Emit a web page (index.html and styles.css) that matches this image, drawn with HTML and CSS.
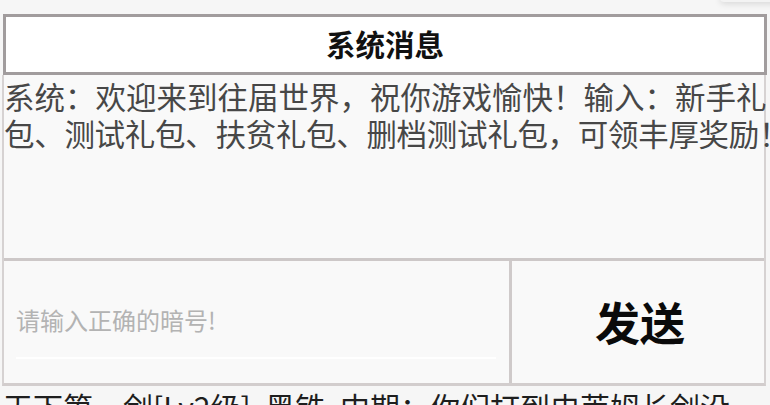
FILE: index.html
```html
<!DOCTYPE html>
<html lang="zh-CN">
<head>
<meta charset="utf-8">
<link rel="stylesheet" href="styles.css">
</head>
<body>
<div class="shadow"></div>
<div class="spacer"></div>
<div class="header">系统消息</div>
<div class="panel">
  <div class="msg">系统：欢迎来到往届世界，祝你游戏愉快！输入：新手礼<br><span class="tight">包、测试礼包、扶贫礼包、删档测试礼包，可领丰厚奖励！</span></div>
  <div class="input-row">
    <div class="field">
      <div class="placeholder">请输入正确的暗号!</div>
      <div class="underline"></div>
    </div>
    <div class="send">发送</div>
  </div>
</div>
<div class="chat">天下第一剑[Lv2级] 黑铁 中期：你们打到史莱姆长剑没</div>
</body>
</html>
```

FILE: styles.css
```css
html, body {
  margin: 0;
  padding: 0;
  overflow: hidden;
}
body {
  width: 770px;
  height: 405px;
  background: #f6f6f6;
  font-family: "Noto Sans CJK SC", "Noto Sans", sans-serif;
  position: relative;
}
.shadow {
  position: absolute;
  top: -6px;
  right: -10px;
  width: 60px;
  height: 8px;
  border-radius: 4px;
  box-shadow: 0 2px 6px rgba(0, 0, 0, 0.12);
  background: #f3f3f3;
}
.spacer {
  height: 14px;
}
.header {
  margin: 0 3px;
  height: 55px;
  border: 3px solid #a19c9d;
  background: #ffffff;
  color: #111;
  font-weight: bold;
  font-size: 29.5px;
  line-height: 53px;
  text-align: center;
}
.panel {
  margin: 0 4px 0 2px;
  border-left: 2px solid #d6d2d2;
  border-right: 2px solid #d6d2d2;
  border-bottom: 3px solid #d2cdcd;
  background: #f9f9f9;
}
.msg {
  height: 180px;
  padding: 3px 0 0 0;
  font-size: 30.5px;
  line-height: 37px;
  color: #474747;
  white-space: nowrap;
  border-bottom: 3px solid #cdc8c8;
}
.tight {
  letter-spacing: -0.3px;
}
.input-row {
  display: grid;
  grid-template-columns: 508px 1fr;
  height: 122px;
}
.field {
  border-right: 3px solid #cfcaca;
  padding: 44px 13px 0 12px;
}
.placeholder {
  font-size: 24px;
  line-height: 30px;
  color: #b3b3b3;
}
.underline {
  margin-top: 22px;
  height: 2px;
  background: #ffffff;
}
.send {
  display: flex;
  align-items: center;
  justify-content: center;
  font-size: 45px;
  font-weight: bold;
  color: #0a0a0a;
  padding-left: 4px;
  padding-bottom: 2px;
}
.chat {
  padding: 0 0 0 3px;
  font-size: 30px;
  line-height: 40px;
  color: #1e1e1e;
  white-space: nowrap;
  word-spacing: 8px;
}
```
